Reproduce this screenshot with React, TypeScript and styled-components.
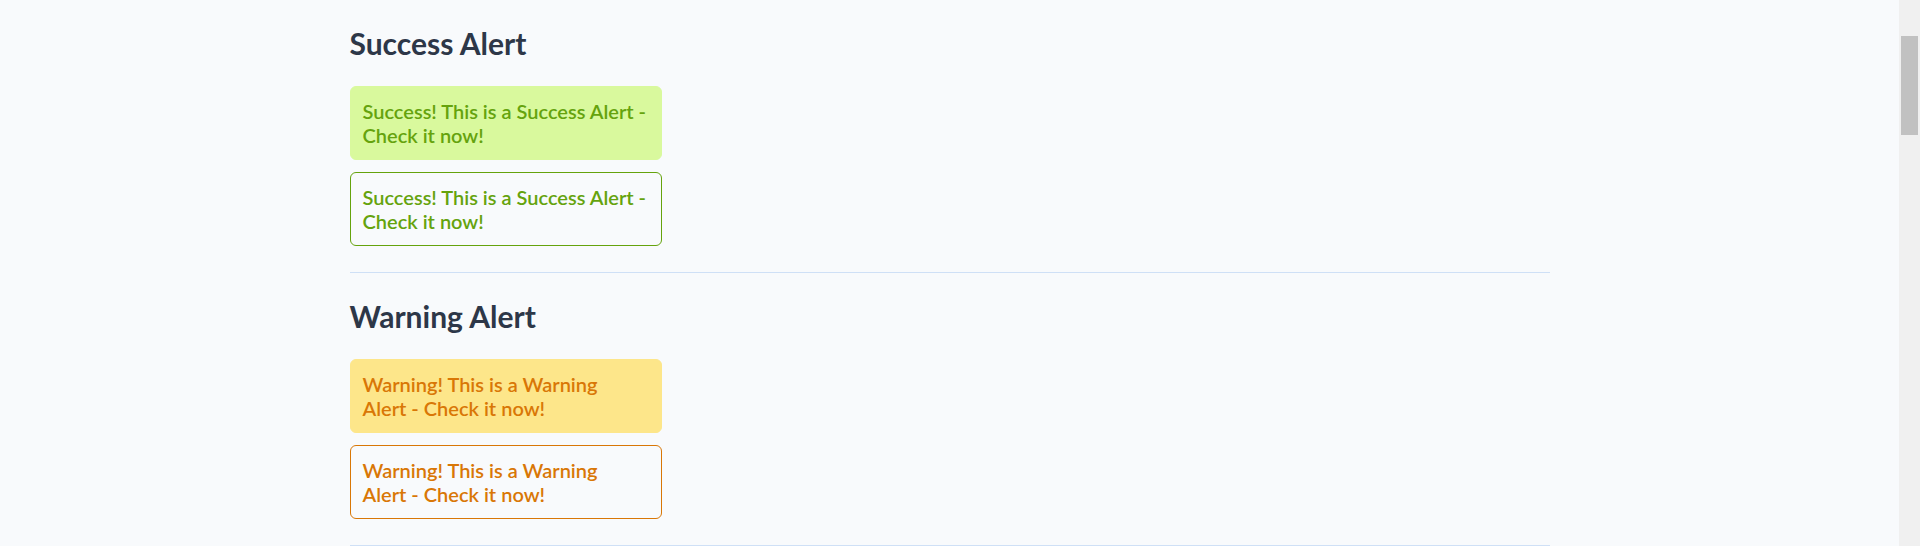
import React from "react";
import styled, { createGlobalStyle } from "styled-components";

const GlobalStyle = createGlobalStyle`
  html, body {
    margin: 0;
    padding: 0;
    height: 546px;
    overflow: hidden;
    background: #f8fafc;
    font-family: Lato, "Open Sans", "Liberation Sans", sans-serif;
  }
`;

const Page = styled.div`
  display: flex;
  height: 546px;
  background: #f8fafc;
`;

const Main = styled.main`
  flex: 1;
  overflow: hidden;
`;

const Container = styled.div`
  max-width: 1200px;
  margin: 0 auto;
`;

const Section = styled.section`
  padding: 25px 0 26px;
  border-bottom: 1px solid #cfe0f6;
`;

const Title = styled.h2`
  margin: 0 0 25px;
  font-size: 30px;
  line-height: 36px;
  font-weight: 700;
  color: #2d3748;
`;

const AlertList = styled.div`
  display: flex;
  flex-direction: column;
  gap: 12px;
`;

type Tone = "success" | "warning";
type Variant = "solid" | "outline";

const palette: Record<Tone, { fg: string; bg: string }> = {
  success: { fg: "#65a30d", bg: "#d9f99d" },
  warning: { fg: "#d97706", bg: "#fde68a" },
};

const Alert = styled.div<{ $tone: Tone; $variant: Variant }>`
  box-sizing: border-box;
  width: 312px;
  padding: 12px;
  border-radius: 6px;
  font-size: 20px;
  line-height: 24px;
  font-weight: 600;
  color: ${(p) => palette[p.$tone].fg};
  background: ${(p) => (p.$variant === "solid" ? palette[p.$tone].bg : "transparent")};
  border: 1px solid
    ${(p) => (p.$variant === "solid" ? palette[p.$tone].bg : palette[p.$tone].fg)};
`;

const Line = styled.span`
  display: block;
`;

const ScrollRail = styled.div`
  width: 21px;
  flex-shrink: 0;
  background: #f0f0f0;
  padding: 36px 2px 0;
  box-sizing: border-box;
`;

const ScrollThumb = styled.div`
  height: 99px;
  background: #c1c1c1;
`;

const sections: { tone: Tone; title: string; lines: string[] }[] = [
  {
    tone: "success",
    title: "Success Alert",
    lines: ["Success! This is a Success Alert -", "Check it now!"],
  },
  {
    tone: "warning",
    title: "Warning Alert",
    lines: ["Warning! This is a Warning", "Alert - Check it now!"],
  },
];

function AlertBox({ tone, variant, lines }: { tone: Tone; variant: Variant; lines: string[] }) {
  return (
    <Alert $tone={tone} $variant={variant}>
      {lines.map((l) => (
        <Line key={l}>{l}</Line>
      ))}
    </Alert>
  );
}

export default function App() {
  return (
    <>
      <GlobalStyle />
      <Page>
        <Main>
          <Container>
            {sections.map((s) => (
              <Section key={s.tone}>
                <Title>{s.title}</Title>
                <AlertList>
                  <AlertBox tone={s.tone} variant="solid" lines={s.lines} />
                  <AlertBox tone={s.tone} variant="outline" lines={s.lines} />
                </AlertList>
              </Section>
            ))}
          </Container>
        </Main>
        <ScrollRail>
          <ScrollThumb />
        </ScrollRail>
      </Page>
    </>
  );
}
